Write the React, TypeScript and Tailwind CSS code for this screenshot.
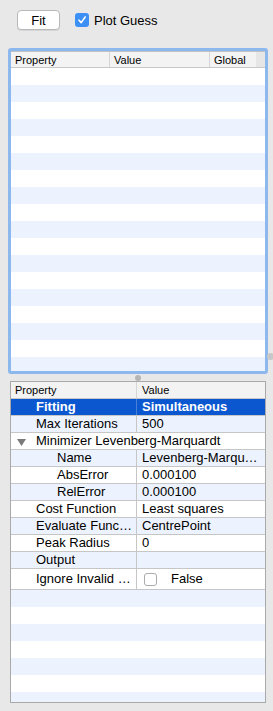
import React from "react";

const font = { fontFamily: '"Liberation Sans", Arial, sans-serif' };

interface PropRow {
  name: string;
  value?: string;
  indent: 0 | 1 | 2;
  selected?: boolean;
  group?: boolean;
  check?: boolean;
}

const rows: PropRow[] = [
  { name: "Fitting", value: "Simultaneous", indent: 1, selected: true },
  { name: "Max Iterations", value: "500", indent: 1 },
  { name: "Minimizer Levenberg-Marquardt", indent: 1, group: true },
  { name: "Name", value: "Levenberg-Marqu…", indent: 2 },
  { name: "AbsError", value: "0.000100", indent: 2 },
  { name: "RelError", value: "0.000100", indent: 2 },
  { name: "Cost Function", value: "Least squares", indent: 1 },
  { name: "Evaluate Func…", value: "CentrePoint", indent: 1 },
  { name: "Peak Radius", value: "0", indent: 1 },
  { name: "Output", value: "", indent: 1 },
  { name: "Ignore Invalid …", value: "False", indent: 1, check: true },
];

function CheckIcon() {
  return (
    <svg width="10" height="10" viewBox="0 0 10 10">
      <path d="M2 5.2 L4.2 7.6 L8.2 2" fill="none" stroke="white" strokeWidth="1.6" strokeLinecap="round" strokeLinejoin="round" />
    </svg>
  );
}

export default function App() {
  const topStripes = Array.from({ length: 18 });
  const bottomStripes = Array.from({ length: 7 });

  return (
    <div className="w-[273px] h-[711px] bg-[#e8e8e8] flex flex-col overflow-hidden text-black" style={font}>
      {/* Toolbar */}
      <div className="flex items-center pt-[10px] pl-[17px] h-[30px] shrink-0">
        <button className="w-[43px] h-[20px] bg-white border border-[#b9b9b9] rounded-[4px] text-[13px] leading-none shadow-[0_1px_0_rgba(0,0,0,0.08)]">
          Fit
        </button>
        <div className="flex items-center ml-[15px] gap-[5px]">
          <span className="w-[14px] h-[14px] rounded-[3px] bg-[#3c8ff5] flex items-center justify-center">
            <CheckIcon />
          </span>
          <span className="text-[13px] leading-none">Plot Guess</span>
        </div>
      </div>

      {/* Top table with focus ring */}
      <div className="relative mt-[18px] ml-[8px] w-[260px] h-[326px] shrink-0 border-[3px] border-[#8cb8ee] rounded-[3px] bg-white overflow-visible">
        <div className="w-full h-full overflow-hidden border-t border-[#c2c2c2]">
          <div className="flex h-[16px] bg-[#f3f3f3] border-b border-[#c8c8c8] text-[11px] leading-[16px]">
            <div className="w-[99px] pl-[4px] border-r border-[#d6d6d6]">Property</div>
            <div className="w-[100px] pl-[4px] border-r border-[#d6d6d6]">Value</div>
            <div className="w-[46px] pl-[4px]">Global</div>
            <div className="flex-1 bg-[#e6e6e6]"></div>
          </div>
          <div className="flex flex-col">
            {topStripes.map((_, i) => (
              <div key={i} className={`h-[17px] shrink-0 ${i % 2 === 0 ? "bg-white" : "bg-[#edf3fe]"}`} />
            ))}
          </div>
        </div>
        <span className="absolute right-[-9px] top-[302px] w-[7px] h-[7px] rounded-full bg-[#c8c8c8]" />
      </div>

      {/* Splitter */}
      <div className="h-[7px] shrink-0 flex items-center pl-[135px]">
        <span className="w-[6px] h-[6px] rounded-full bg-[#b5b5b5]" />
      </div>

      {/* Property browser */}
      <div className="ml-[10px] w-[256px] h-[322px] shrink-0 border border-[#a9a9a9] bg-white overflow-hidden">
        <div className="flex h-[17px] bg-[#f3f3f3] border-b border-[#c8c8c8] text-[11px] leading-[16px]">
          <div className="w-[126px] pl-[4px] border-r border-[#d6d6d6]">Property</div>
          <div className="flex-1 pl-[5px]">Value</div>
        </div>
        {rows.map((r, i) => {
          const bg = r.selected ? "bg-[#0b57d0]" : i % 2 === 1 ? "bg-[#edf3fe]" : "bg-white";
          const txt = r.selected ? "text-white font-bold" : "";
          const h = r.check ? "h-[21px]" : "h-[17px]";
          const pad = r.indent === 2 ? "pl-[46px]" : "pl-[25px]";
          return (
            <div key={r.name} className={`flex ${h} ${bg} ${txt} border-b border-[#c6c6c6] text-[13px] leading-[16px] whitespace-nowrap`}>
              {r.group ? (
                <div className="flex-1 flex items-center relative pl-[25px]">
                  <svg className="absolute left-[6px] top-[6px]" width="9" height="7" viewBox="0 0 9 7">
                    <path d="M0 0 H9 L4.5 7 Z" fill="#7a7a7a" />
                  </svg>
                  {r.name}
                </div>
              ) : (
                <>
                  <div className={`w-[126px] shrink-0 flex items-center ${pad} border-r ${r.selected ? "border-[#4a7fd8]" : "border-[#c6c6c6]"}`}>
                    {r.name}
                  </div>
                  <div className="flex-1 flex items-center pl-[5px] overflow-hidden">
                    {r.check ? (
                      <>
                        <span className="w-[13px] h-[13px] ml-[2px] bg-white border border-[#ababab] rounded-[3px]" />
                        <span className="ml-[14px]">{r.value}</span>
                      </>
                    ) : (
                      r.value
                    )}
                  </div>
                </>
              )}
            </div>
          );
        })}
        <div className="flex flex-col">
          {bottomStripes.map((_, i) => (
            <div key={i} className={`h-[17px] shrink-0 ${i % 2 === 0 ? "bg-[#edf3fe]" : "bg-white"}`} />
          ))}
        </div>
      </div>
    </div>
  );
}
